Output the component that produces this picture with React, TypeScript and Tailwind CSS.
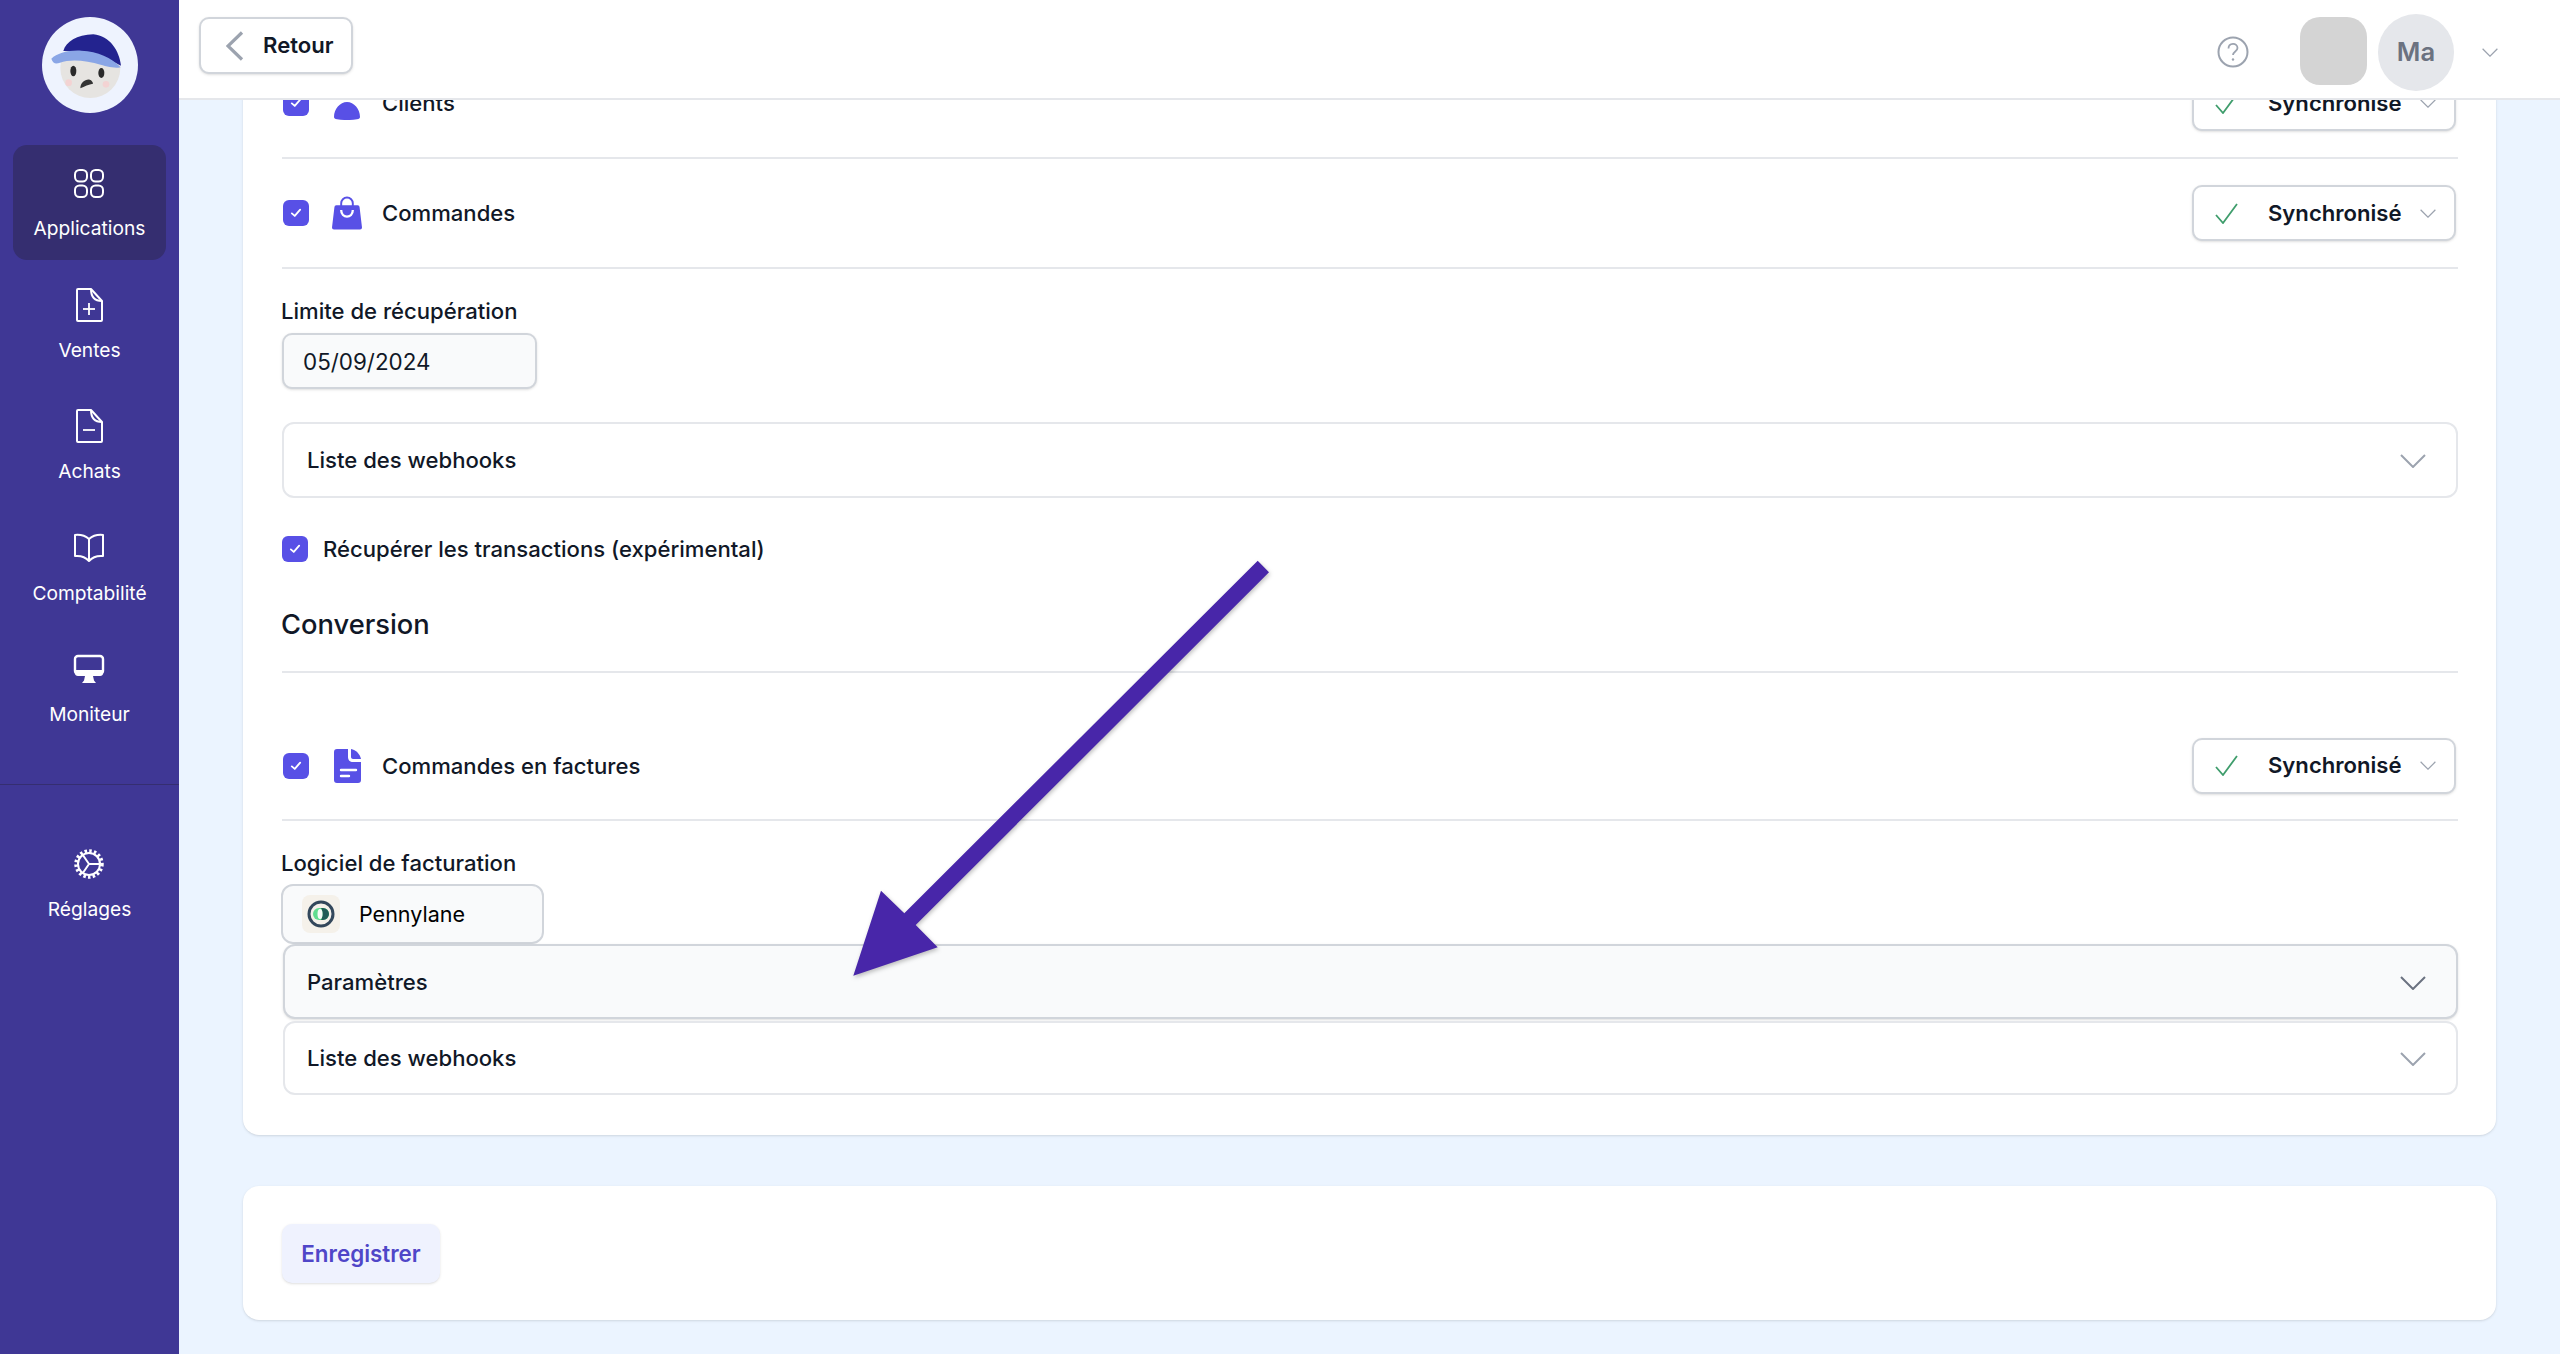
import { ReactNode } from "react";

function Chevron({ className }: { className: string }) {
  return (
    <svg viewBox="0 0 26 14" fill="none" stroke="currentColor" strokeWidth="2" className={className}>
      <path d="M1 1l12 12L25 1" />
    </svg>
  );
}

function AppsIcon() {
  return (
    <svg viewBox="0 0 30 29" fill="none" stroke="currentColor" strokeWidth="2" className="h-[29px] w-[30px]">
      <rect x="1" y="1" width="12" height="11.5" rx="4.5" />
      <rect x="17" y="1" width="12" height="11.5" rx="4.5" />
      <rect x="1" y="16.5" width="12" height="11.5" rx="4.5" />
      <rect x="17" y="16.5" width="12" height="11.5" rx="4.5" />
    </svg>
  );
}

function FileIcon({ plus }: { plus?: boolean }) {
  return (
    <svg viewBox="0 0 28 34" fill="none" stroke="currentColor" strokeWidth="2" strokeLinejoin="round" className="h-[34px] w-[28px]">
      <path d="M3 1h13l11 12v19a1 1 0 0 1-1 1H3a1 1 0 0 1-1-1V2a1 1 0 0 1 1-1z" />
      <path d="M16 1c0 8 3 12 11 12" />
      <path d="M8 21h12" strokeWidth="1.8" />
      {plus && <path d="M14 15v12" strokeWidth="1.8" />}
    </svg>
  );
}

function BookIcon() {
  return (
    <svg viewBox="0 0 32 30" fill="none" stroke="currentColor" strokeWidth="2" strokeLinejoin="round" className="h-[30px] w-[32px]">
      <path d="M16 6C12 2.5 7 1.5 2 2v21c5-.5 10 .5 14 5 4-4.500 9-5.500 14-5V2c-5-.5-10 .5-14 4z" />
      <path d="M16 6v22" />
    </svg>
  );
}

function MonitorIcon() {
  return (
    <svg viewBox="0 0 32 30" className="h-[30px] w-[32px]">
      <rect x="2" y="2" width="28" height="18" rx="3" fill="none" stroke="currentColor" strokeWidth="2.4" />
      <path d="M2 16h28v3a3 3 0 0 1-3 3H5a3 3 0 0 1-3-3z" fill="currentColor" />
      <path d="M12 22h8l1 4.500 2 2.500H9l2-2.500z" fill="currentColor" />
    </svg>
  );
}

function GearIcon() {
  return (
    <svg viewBox="0 0 32 32" fill="none" stroke="currentColor" className="h-[32px] w-[32px]">
      <circle cx="16" cy="16" r="13" strokeWidth="3.5" strokeDasharray="2.5 2.2" />
      <circle cx="16" cy="16" r="11" strokeWidth="2" />
      <path d="M16 16L9.500 6.500M16 16l-6.500 9.500M16 16h11" strokeWidth="2" />
    </svg>
  );
}

function NavItem({ icon, label, active }: { icon: ReactNode; label: string; active?: boolean }) {
  return (
    <div className={"mx-[13px] flex h-[115px] flex-col items-center rounded-[14px] text-white " + (active ? "bg-[#352e70]" : "")}>
      <div className="mr-[2px] mt-[20px] flex h-[36px] items-center justify-center">{icon}</div>
      <div className="mt-[13px] text-[19.2px] leading-[28px]">{label}</div>
    </div>
  );
}

function BirdLogo() {
  return (
    <svg viewBox="126 50 288 288" className="h-[96px] w-[96px]">
      <circle cx="270" cy="194" r="144" fill="#eef3fe" />
      <circle cx="271" cy="203" r="90" fill="#e6e4e1" />
      <path d="M190 152c8-28 40-48 90-50 50 4 78 50 83 94-50-28-120-46-173-44z" fill="#23238f" />
      <path d="M154 175c18-16 48-26 90-24 50 3 90 20 118 50-6 4-40-2-60-8-40-12-90-18-122-6-10 3-20 6-26-12z" fill="#8aa6e6" />
      <ellipse cx="220" cy="212" rx="9" ry="16" fill="#2a2a2a" />
      <ellipse cx="304" cy="218" rx="9" ry="15" fill="#2a2a2a" />
      <path d="M241 264c0-16 14-28 28-26 6 1 10 8 10 12-12 2-26 8-38 14z" fill="#333" />
      <circle cx="206" cy="247" r="10" fill="#f3d3d3" />
      <circle cx="318" cy="252" r="10" fill="#f3d3d3" />
    </svg>
  );
}

function CheckBox() {
  return (
    <div className="flex h-[26px] w-[26px] shrink-0 items-center justify-center rounded-[6px] bg-[#5850e6]">
      <svg viewBox="0 0 14 12" fill="none" stroke="white" strokeWidth="2.2" strokeLinecap="round" strokeLinejoin="round" className="h-[10px] w-[12px]">
        <path d="M2 6.500l3.500 3L12 2" />
      </svg>
    </div>
  );
}

function PersonIcon() {
  return (
    <svg viewBox="0 0 30 34" fill="#5850e6" className="h-[34px] w-[30px]">
      <circle cx="15" cy="6" r="6" />
      <path d="M2 31c0-8 6-15 13-15s13 7 13 15c0 1-1 2-3 2.300-6 1-14 1-20 0-2-.3-3-1.300-3-2.300z" />
    </svg>
  );
}

function BagIcon() {
  return (
    <svg viewBox="0 0 31 34" className="h-[34px] w-[31px]">
      <path d="M4.500 9h22a2 2 0 0 1 2 2l2.500 21a2 2 0 0 1-2 2H2a2 2 0 0 1-2-2l2.500-21a2 2 0 0 1 2-2z" fill="#5850e6" />
      <path d="M9.500 11V7a6 6 0 0 1 12 0v4" fill="none" stroke="#5850e6" strokeWidth="2" />
      <path d="M9.500 14c0 9 12 9 12 0" fill="none" stroke="white" strokeWidth="2.400" />
    </svg>
  );
}

function DocIcon() {
  return (
    <svg viewBox="0 0 27 34" className="h-[34px] w-[27px]">
      <path d="M3 0h11v8c0 3 2 5 5 5h8v18a3 3 0 0 1-3 3H3a3 3 0 0 1-3-3V3a3 3 0 0 1 3-3z" fill="#5850e6" />
      <path d="M17 0c5 1 9 5 10 10h-8c-1 0-2-1-2-2z" fill="#5850e6" />
      <path d="M7 21h15M7 27h8" stroke="white" strokeWidth="2.400" strokeLinecap="round" />
    </svg>
  );
}

function SyncButton() {
  return (
    <div className="mr-[2px] flex h-[56px] w-[264px] items-center rounded-[10px] border-2 border-[#d1d5db] bg-white pl-[21px] shadow-sm">
      <svg viewBox="0 0 23 21" fill="none" stroke="#3f9d6c" strokeWidth="1.800" className="h-[21px] w-[23px] shrink-0">
        <path d="M1 12l7 8L22 1" />
      </svg>
      <span className="ml-[30px] pt-px text-[22.1px] font-semibold text-[#111827]">Synchronisé</span>
      <Chevron className="ml-[18px] h-[9px] w-[16px] shrink-0 text-[#9ca3af]" />
    </div>
  );
}

function SyncRow({ icon, label, className }: { icon: ReactNode; label: string; className?: string }) {
  return (
    <div className={"flex items-center border-b-2 border-[#e5e7eb] pl-px " + (className ?? "h-[110px]")}>
      <CheckBox />
      <div className="ml-[23px] flex w-[30px] justify-center">{icon}</div>
      <span className="ml-[20px] flex-1 pt-[2px] text-[22.1px] font-medium text-[#111827]">{label}</span>
      <SyncButton />
    </div>
  );
}

function Accordion({ label, active, className }: { label: string; active?: boolean; className: string }) {
  return (
    <div
      className={
        "flex items-center justify-between rounded-[12px] border-2 pr-[30px] pt-[2px] " +
        (active ? "border-[#d1d5db] bg-[#f9fafb] shadow-sm " : "border-[#e5e7eb] bg-white ") +
        className
      }
    >
      <span className="text-[22.1px] font-medium text-[#111827]">{label}</span>
      <Chevron className={"h-[14px] w-[26px] " + (active ? "text-[#6b7280]" : "text-[#9ca3af]")} />
    </div>
  );
}

function FieldLabel({ children, className }: { children: ReactNode; className: string }) {
  return <div className={"-ml-px text-[22.1px] font-medium leading-[32px] text-[#111827] " + className}>{children}</div>;
}

export default function App() {
  return (
    <div className="relative flex h-screen overflow-hidden bg-[#ebf4ff] font-[family-name:Inter,sans-serif]">
      <aside className="flex w-[179px] shrink-0 flex-col bg-[#3f3795]">
        <div className="flex justify-center pt-[17px]">
          <BirdLogo />
        </div>
        <div className="mt-[32px] flex flex-col gap-[6.500px]">
          <NavItem active icon={<AppsIcon />} label="Applications" />
          <NavItem icon={<FileIcon plus />} label="Ventes" />
          <NavItem icon={<FileIcon />} label="Achats" />
          <NavItem icon={<BookIcon />} label="Comptabilité" />
          <NavItem icon={<MonitorIcon />} label="Moniteur" />
        </div>
        <div className="mt-[38px] border-t border-[#352e70]" />
        <div className="mt-[41px]">
          <NavItem icon={<GearIcon />} label="Réglages" />
        </div>
      </aside>

      <div className="flex min-w-0 flex-1 flex-col">
        <header className="z-10 flex h-[100px] shrink-0 items-center border-b-2 border-[#e5e7eb] bg-white pl-[20px] pr-[62px]">
          <div className="mb-[7px] flex h-[57px] w-[154px] items-center rounded-[10px] border-2 border-[#d1d5db] bg-white pl-[25px] shadow-sm">
            <svg viewBox="0 0 18 30" fill="none" stroke="#9ca3af" strokeWidth="3.200" className="h-[30px] w-[18px]">
              <path d="M16 1.500L2 15l14 13.500" />
            </svg>
            <span className="ml-[19px] pt-px text-[22.1px] font-semibold text-[#111827]">Retour</span>
          </div>
          <div className="flex-1" />
          <div className="mt-[6px] flex items-center">
            <svg viewBox="0 0 32 32" fill="none" stroke="#9ca3af" className="h-[32px] w-[32px]">
              <circle cx="16" cy="16" r="14.500" strokeWidth="2" />
              <path d="M11.500 12.500c0-6 9-6 9-.5 0 3.500-4.500 3.500-4.500 7" strokeWidth="1.800" />
              <circle cx="16" cy="23.500" r="1.200" fill="#9ca3af" stroke="none" />
            </svg>
            <div className="mb-[2px] ml-[51px] h-[68px] w-[67px] rounded-[20px] bg-[#d4d4d4]" />
            <div className="ml-[11px] flex h-[77px] w-[76px] items-center justify-center rounded-full bg-[#e5e7eb] text-[25.6px] font-semibold text-[#6b7280]">
              Ma
            </div>
            <Chevron className="ml-[28px] h-[9px] w-[16px] text-[#9ca3af]" />
          </div>
        </header>

        <main className="min-h-0 flex-1 overflow-hidden px-[64px]">
          <div className="-mt-[51px]">
            <section className="rounded-[16px] bg-white px-[38px] pb-[40px] pl-[39px] shadow-sm">
              <SyncRow icon={<PersonIcon />} label="Clients" />
              <SyncRow icon={<BagIcon />} label="Commandes" />

              <FieldLabel className="mt-[26px]">Limite de récupération</FieldLabel>
              <div className="mt-[6px] flex h-[56px] w-[255px] items-center rounded-[10px] border-2 border-[#d1d5db] bg-[#f9fafb] pl-[19px] pt-px text-[22.4px] text-[#111827] shadow-sm">
                05/09/2024
              </div>

              <Accordion label="Liste des webhooks" className="mt-[33px] h-[76px] pl-[23px]" />

              <div className="mt-[35px] flex h-[32px] items-center gap-[15px]">
                <CheckBox />
                <span className="pt-[2px] text-[22.1px] font-medium text-[#111827]">Récupérer les transactions (expérimental)</span>
              </div>

              <h2 className="-ml-px mt-[40px] h-[39px] text-[27.3px] font-medium leading-[40px] text-[#111827]">Conversion</h2>
              <div className="mt-[27px] border-t-2 border-[#e5e7eb]" />

              <div className="mt-[39px]">
                <SyncRow icon={<DocIcon />} label="Commandes en factures" className="h-[109px]" />
              </div>

              <FieldLabel className="mt-[26px]">Logiciel de facturation</FieldLabel>
              <div className="-ml-px mt-[5px] flex h-[60px] w-[263px] items-center rounded-[12px] border-2 border-[#d1d5db] bg-[#f9fafb] pl-[19px]">
                <div className="flex h-[38px] w-[38px] items-center justify-center rounded-[8px] bg-[#f5f1ea]">
                  <svg viewBox="0 0 28 28" className="h-[28px] w-[28px]">
                    <circle cx="14" cy="14" r="12" fill="none" stroke="#33475b" strokeWidth="3" />
                    <rect x="6" y="8" width="16" height="12" rx="6" fill="#5fdc8f" />
                    <path d="M14 8h2a6 6 0 0 1 0 12h-2c2-3 2-9 0-12z" fill="#1f5c57" />
                    <ellipse cx="13" cy="14" rx="2.500" ry="5" fill="#f4fbf6" />
                  </svg>
                </div>
                <span className="ml-[19px] text-[21.5px] text-black">Pennylane</span>
              </div>
              <Accordion active label="Paramètres" className="ml-px h-[75px] pl-[22px]" />
              <Accordion label="Liste des webhooks" className="ml-px mt-[2px] h-[74px] pl-[22px]" />
            </section>

            <section className="mt-[51px] rounded-[16px] bg-white pb-[37px] pl-[39px] pt-[38px] shadow-sm">
              <div className="flex h-[59px] w-[158px] items-center justify-center rounded-[10px] bg-[#eff2fe] text-[22.4px] font-semibold text-[#4f46c8] shadow-sm">
                Enregistrer
              </div>
            </section>
          </div>
        </main>
      </div>

      <svg viewBox="850 555 425 425" className="absolute left-[850px] top-[555px] z-20 h-[425px] w-[425px] drop-shadow-[1px_2px_2px_rgba(0,0,0,0.25)]">
        <polygon fill="#4826a9" points="1257.7,560.7 1269,572.3 915.7,925 937.7,947.3 853.3,975.7 881,890.700 904.3,913.3" />
      </svg>
    </div>
  );
}
